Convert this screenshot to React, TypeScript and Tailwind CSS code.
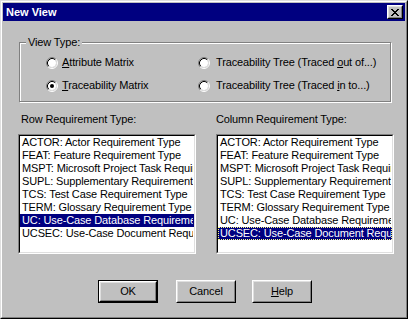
const rowTypes = [
  'ACTOR: Actor Requirement Type',
  'FEAT: Feature Requirement Type',
  'MSPT: Microsoft Project Task Requirement Type',
  'SUPL: Supplementary Requirement Type',
  'TCS: Test Case Requirement Type',
  'TERM: Glossary Requirement Type',
  'UC: Use-Case Database Requirement Type',
  'UCSEC: Use-Case Document Requirement Type',
];

function Radio({ checked }: { checked?: boolean }) {
  return (
    <svg width="12" height="12" viewBox="0 0 12 12" className="shrink-0">
      <path d="M9.89 2.11A5.5 5.5 0 0 0 2.11 9.89" fill="none" stroke="#808080" />
      <path d="M9.89 2.11A5.5 5.5 0 0 1 2.11 9.89" fill="none" stroke="#ffffff" />
      <circle cx="6" cy="6" r="4" fill="#ffffff" />
      <path d="M9.18 2.82A4.5 4.5 0 0 0 2.82 9.18" fill="none" stroke="#000000" />
      <path d="M9.18 2.82A4.5 4.5 0 0 1 2.82 9.18" fill="none" stroke="#dfdfdf" />
      {checked && <circle cx="6" cy="6" r="2" fill="#000000" />}
    </svg>
  );
}

function Option({ label, checked, gap }: { label: React.ReactNode; checked?: boolean; gap: string }) {
  return (
    <div className="flex items-center h-[13px]">
      <Radio checked={checked} />
      <span className={gap + ' leading-[13px] whitespace-nowrap'}>{label}</span>
    </div>
  );
}

function ListBox({ selected, focus }: { selected: number; focus?: boolean }) {
  return (
    <div className="w-[178px] h-[120px] border border-t-[#808080] border-l-[#808080] border-r-white border-b-white">
      <div className="h-full border border-t-black border-l-black border-r-[#dfdfdf] border-b-[#dfdfdf] bg-white overflow-hidden">
        {rowTypes.map((t, i) => (
          <div
            key={t}
            className={
              'h-[13px] leading-[11px] pl-[1px] whitespace-nowrap overflow-hidden border ' +
              (i === selected
                ? 'bg-[#000080] text-white ' + (focus ? 'border-dotted border-[#ffff80]' : 'border-transparent')
                : 'border-transparent text-black')
            }
          >
            {t}
          </div>
        ))}
      </div>
    </div>
  );
}

function Button({ children, def }: { children: React.ReactNode; def?: boolean }) {
  if (def) {
    return (
      <div className="w-[60px] h-[23px] border border-black">
        <div className="h-full border border-t-white border-l-white border-r-black border-b-black">
          <div className="h-full border border-t-[#dfdfdf] border-l-[#dfdfdf] border-r-[#808080] border-b-[#808080] flex items-center justify-center">
            {children}
          </div>
        </div>
      </div>
    );
  }
  return (
    <div className="w-[60px] h-[23px] border border-t-white border-l-white border-r-black border-b-black">
      <div className="h-full border border-t-[#dfdfdf] border-l-[#dfdfdf] border-r-[#808080] border-b-[#808080] flex items-center justify-center">
        {children}
      </div>
    </div>
  );
}

export default function App() {
  return (
    <div
      className="w-[408px] h-[319px] bg-[#c0c0c0] text-[11px] tracking-[-0.13px] text-black border border-t-[#dfdfdf] border-l-[#dfdfdf] border-r-black border-b-black"
      style={{ fontFamily: '"Liberation Sans", Arial, sans-serif' }}
    >
      <div className="h-full border border-t-white border-l-white border-r-[#808080] border-b-[#808080] p-px">
        {/* title bar */}
        <div className="h-[18px] bg-[#000080] flex items-center justify-between pl-[3px] pr-[2px]">
          <span className="text-white font-bold text-[11px] tracking-normal leading-[13px]">New View</span>
          <div className="w-[16px] h-[14px] border border-t-white border-l-white border-r-black border-b-black">
            <div className="h-full border border-t-[#dfdfdf] border-l-[#dfdfdf] border-r-[#808080] border-b-[#808080] bg-[#c0c0c0] flex items-center justify-center">
              <svg width="8" height="7" viewBox="0 0 8 7" shapeRendering="crispEdges">
                <path
                  d="M0 0h2v1h-2zM6 0h2v1h-2zM1 1h2v1h-2zM5 1h2v1h-2zM2 2h4v1h-4zM3 3h2v1h-2zM2 4h4v1h-4zM1 5h2v1h-2zM5 5h2v1h-2zM0 6h2v1h-2zM6 6h2v1h-2z"
                  fill="#000"
                />
              </svg>
            </div>
          </div>
        </div>

        {/* view type group */}
        <div className="relative mt-[21px] ml-[16px] w-[372px] h-[60px] border border-[#808080] shadow-[inset_1px_1px_0_#fff,1px_1px_0_#fff]">
          <span className="absolute left-[6px] top-[-7px] px-[2px] bg-[#c0c0c0] leading-[13px]">View Type:</span>
          <div className="grid grid-cols-[152px_1fr] gap-y-[10px] pl-[26px] pt-[13px]">
            <Option gap="ml-[4px]" label={<><u>A</u>ttribute Matrix</>} />
            <Option gap="ml-[6px]" label={<>Traceability Tree (Traced <u>o</u>ut of...)</>} />
            <Option gap="ml-[4px]" checked label={<><u>T</u>raceability Matrix</>} />
            <Option gap="ml-[6px]" label={<>Traceability Tree (Traced <u>i</u>n to...)</>} />
          </div>
        </div>

        {/* requirement lists */}
        <div className="flex mt-[11px] ml-[15px]">
          <div className="w-[198px]">
            <div className="leading-[13px] pl-[3px] mb-[8px]">Row Requirement Type:</div>
            <ListBox selected={6} />
          </div>
          <div>
            <div className="leading-[13px] mb-[8px]">Column Requirement Type:</div>
            <ListBox selected={7} focus />
          </div>
        </div>

        {/* buttons */}
        <div className="flex mt-[26px] ml-[95px]">
          <Button def>OK</Button>
          <div className="ml-[18px]">
            <Button>Cancel</Button>
          </div>
          <div className="ml-[16px]">
            <Button>
              <u>H</u>elp
            </Button>
          </div>
        </div>
      </div>
    </div>
  );
}
